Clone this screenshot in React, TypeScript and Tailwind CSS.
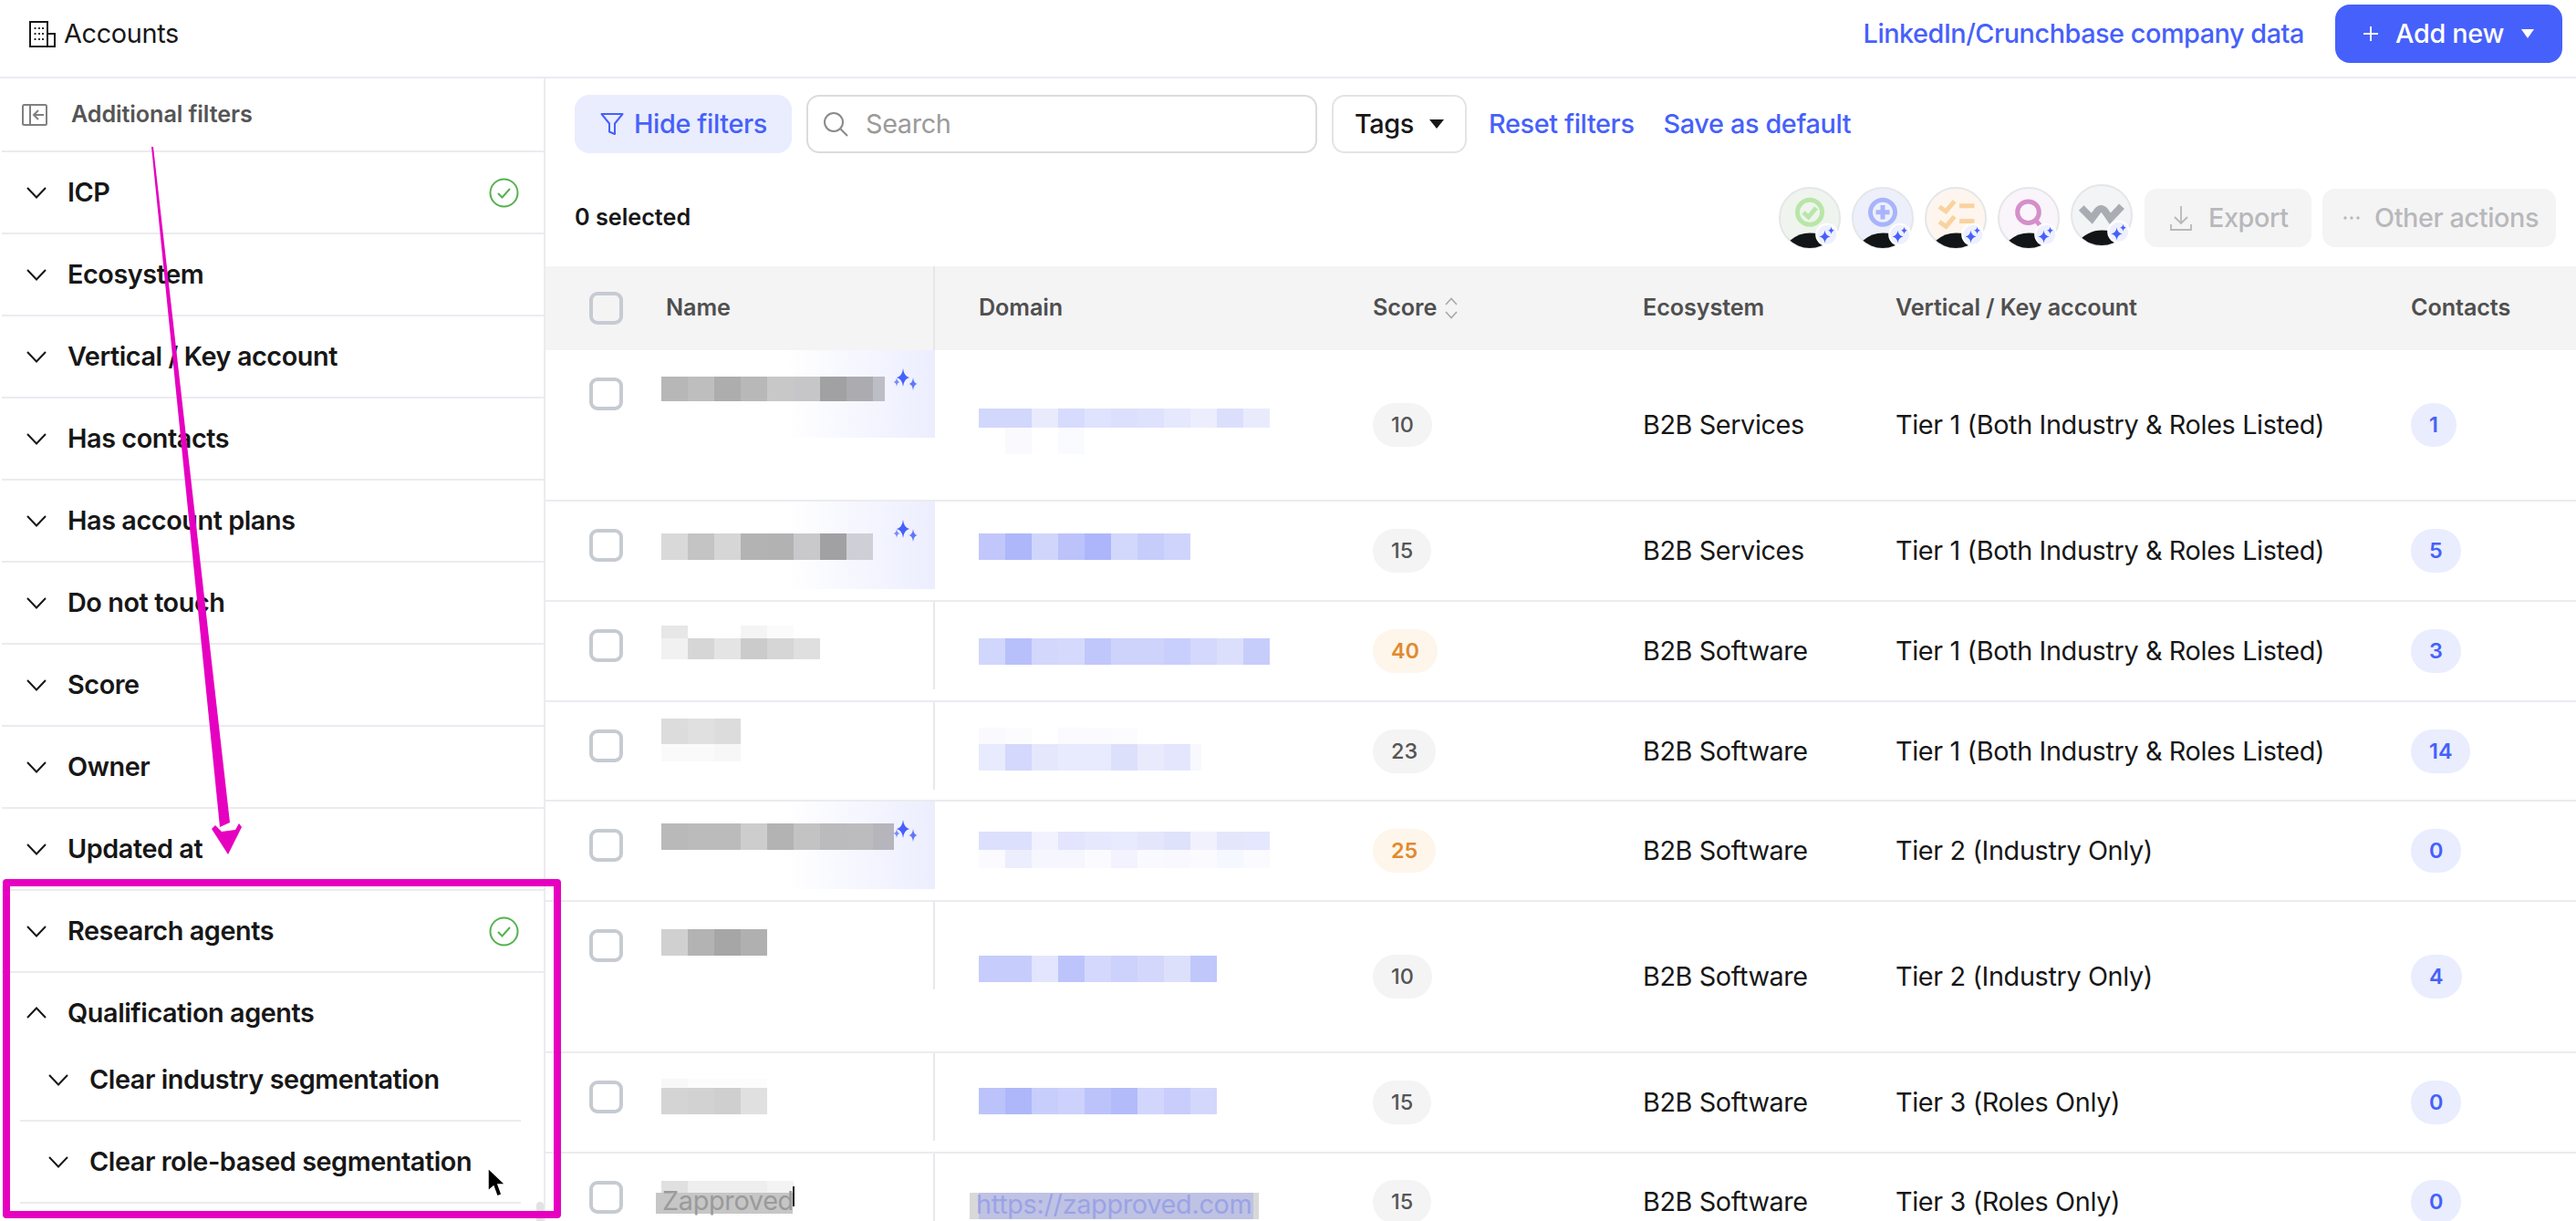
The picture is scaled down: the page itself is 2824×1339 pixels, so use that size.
import React from "react";

const star = (x: number, y: number, r: number, ry = r) => {
  const a = r * 0.14;
  const b = ry * 0.14;
  return `M${x} ${y - ry}Q${x + a} ${y - b} ${x + r} ${y}Q${x + a} ${y + b} ${x} ${y + ry}Q${x - a} ${y + b} ${x - r} ${y}Q${x - a} ${y - b} ${x} ${y - ry}Z`;
};

const Chevron = ({ up }: { up?: boolean }) => (
  <svg width="22" height="13" viewBox="0 0 22 13" fill="none" stroke="#171717" strokeWidth="2" className="shrink-0">
    <path d={up ? "M1 12 11 1.5 21 12" : "M1 1 11 11.5 21 1"} />
  </svg>
);

const GreenCheck = () => (
  <svg width="33" height="33" viewBox="0 0 33 33" fill="none" stroke="#55b24f" strokeWidth="2" className="mr-[1px] shrink-0">
    <circle cx="16.5" cy="16.5" r="15" />
    <path d="M10 17 14.5 21.5 23 12" />
  </svg>
);

const SideRow = ({ label, check }: { label: string; check?: boolean }) => (
  <div className="flex h-[90px] items-center border-b-2 border-[#ebebf0] pl-[27px] pr-[26px]">
    <Chevron />
    <span className="ml-[23px] flex-1 text-[28.8px] font-semibold tracking-[-0.43px] text-[#171717]">{label}</span>
    {check && <GreenCheck />}
  </div>
);

const ChildRow = ({ label }: { label: string }) => (
  <div className="ml-[20px] mr-[25px] flex h-[90px] items-center border-b-2 border-[#ebebf0] pl-[31px]">
    <Chevron />
    <span className="ml-[23px] text-[28.8px] font-semibold tracking-[-0.43px] text-[#171717]">{label}</span>
  </div>
);

type PixelRow = [number, string[], number?];
type Pix = { top: number; rows: PixelRow[] };

const Pixels = ({ top, rows }: Pix) => (
  <div className="flex flex-col" style={{ marginTop: top }}>
    {rows.map(([h, colors, last], i) => (
      <div key={i} className="flex" style={{ height: h }}>
        {colors.map((c, j) => (
          <div
            key={j}
            style={{
              background: c ? `#${c}` : "transparent",
              width: j === colors.length - 1 && last ? last : 29,
            }}
          />
        ))}
      </div>
    ))}
  </div>
);

type Row = {
  h: number;
  ai?: boolean;
  name: Pix;
  domain: Pix;
  score: string;
  orange?: boolean;
  eco: string;
  vert: string;
  contacts: string;
};

const T1 = "Tier 1 (Both Industry & Roles Listed)";
const T2 = "Tier 2 (Industry Only)";
const T3 = "Tier 3 (Roles Only)";

const rows: Row[] = [
  {
    h: 166, ai: true, score: "10", eco: "B2B Services", vert: T1, contacts: "1",
    name: { top: 29, rows: [[27, ["b7b7b7", "bebebe", "adadad", "b8b8b8", "c8c8c8", "c6c6c8", "a1a1a3", "acacb0", "bdbdc5"], 13]] },
    domain: { top: 64, rows: [
      [21, ["d2d7fc", "d2d7fc", "e9ebfd", "d7dbfd", "e0e3fd", "dde0fc", "dee2fd", "e6e8fd", "eceefe", "dcdffc", "e9ebfd"]],
      [29, ["", "fafafe", "", "fafbff"]],
    ] },
  },
  {
    h: 110, ai: true, score: "15", eco: "B2B Services", vert: T1, contacts: "5",
    name: { top: 35, rows: [[29, ["d9d9d9", "c4c4c4", "d6d6d6", "b3b3b3", "b2b2b2", "c9c9cb", "a1a1a3", "cfcfd8"]]] },
    domain: { top: 35, rows: [[29, ["c1c7fb", "aeb7fa", "d0d5fc", "bcc3fb", "adb6fa", "d2d7fc", "c7cdfb", "cfd4fc"]]] },
  },
  {
    h: 110, score: "40", orange: true, eco: "B2B Software", vert: T1, contacts: "3",
    name: { top: 26, rows: [
      [14, ["e7e7e7", "", "", "f4f4f4", "fbfbfb"]],
      [23, ["f1f1f1", "d6d6d6", "e4e4e4", "cbcbcb", "d6d6d6", "dfdfdf"]],
    ] },
    domain: { top: 40, rows: [[29, ["d1d6fc", "b8c0fb", "d3d7fb", "d5d9fc", "c0c7fb", "ced3fc", "ced3fc", "c9cffc", "d3d8fc", "dcdffb", "c7cdfb"]]] },
  },
  {
    h: 109, score: "23", eco: "B2B Software", vert: T1, contacts: "14",
    name: { top: 18, rows: [
      [28, ["dcdcdc", "e0e0e0", "dcdcdc"]],
      [19, ["fafafa", "fafafa", "f7f7f7"]],
    ] },
    domain: { top: 28, rows: [
      [18, ["f9f9fe", "fcfcff", "", "fafaff", "fbfbff", "fcfcff"]],
      [29, ["e8ebfd", "d3d8fc", "e5e7fd", "e8eafd", "e8eafd", "dde0fb", "e9ebfd", "e3e6fd", "f8f9ff"], 12],
    ] },
  },
  {
    h: 110, ai: true, score: "25", orange: true, eco: "B2B Software", vert: T2, contacts: "0",
    name: { top: 24, rows: [[29, ["b9b9b9", "bbbbbb", "bbbbbb", "cdcdcd", "b3b3b3", "c3c3c3", "bbbbbd", "bcbcbf", "b5b5bb"], 23]] },
    domain: { top: 33, rows: [
      [20, ["dde0fc", "dde0fc", "f1f2fe", "e2e5fd", "e6e8fd", "e8eafd", "e4e7fc", "dfe2fb", "f0f1fd", "e4e7fc", "e4e7fd"]],
      [20, ["fafaff", "eceefd", "f6f7fe", "f5f6fe", "fbfbff", "f2f3fe", "f9faff", "f8f8fe", "fbfbff", "f5f8fe", "fafaff"]],
    ] },
  },
  {
    h: 166, score: "10", eco: "B2B Software", vert: T2, contacts: "4",
    name: { top: 30, rows: [[29, ["d0d0d0", "b3b3b3", "a6a6a6", "b0b0b0"]]] },
    domain: { top: 59, rows: [[29, ["c6ccfb", "c6ccfb", "e2e5fd", "bcc4fb", "d4d8fc", "cdd2fc", "d3d7fb", "dde0fb", "c0c7fb"]]] },
  },
  {
    h: 110, score: "15", eco: "B2B Software", vert: T3, contacts: "0",
    name: { top: 28, rows: [
      [10, ["f8f8f8", "fcfcfc", "fcfcfc", "fcfcfc"]],
      [29, ["d4d4d4", "d2d2d2", "cfcfcf", "e0e0e0"]],
    ] },
    domain: { top: 38, rows: [[29, ["bcc3fb", "aeb7fa", "c8cefb", "cdd2fc", "bcc3fb", "b3bbfb", "d2d6fc", "c8cdfb", "d3d7fc"]]] },
  },
];

const Badge = ({ children, cls }: { children: React.ReactNode; cls: string }) => (
  <span className={`flex h-[48px] items-center rounded-full px-[20px] text-[23.4px] ${cls}`}>{children}</span>
);

const Checkbox = () => (
  <div className="h-[36px] w-[37px] shrink-0 rounded-[9px] border-[4px] border-[#c6cbd2]" />
);

const Cells = ({ score, orange, eco, vert, contacts }: Pick<Row, "score" | "orange" | "eco" | "vert" | "contacts">) => (
  <>
    <div className="flex w-[296px] shrink-0 items-center">
      <Badge cls={orange ? "bg-[#fef5eb] font-semibold text-[#e08a2f]" : "bg-[#f4f4f4] font-medium text-[#555555]"}>{score}</Badge>
    </div>
    <div className="flex w-[277px] shrink-0 items-center text-[28.8px] tracking-[-0.4px] text-[#171717]">{eco}</div>
    <div className="flex w-[565px] shrink-0 items-center text-[28.8px] tracking-[-0.36px] text-[#171717]">{vert}</div>
    <div className="flex flex-1 items-center">
      <Badge cls="bg-[#e9edfe] font-semibold text-[#4660fb]">{contacts}</Badge>
    </div>
  </>
);

const TableRow = ({ r }: { r: Row }) => (
  <div className="flex shrink-0 border-b-2 border-[#ebebf0]" style={{ height: r.h }}>
    <div className={`relative h-[96px] w-[427px] shrink-0 ${r.ai ? "" : "border-r-2 border-[#e8e8ea]"}`}>
      {r.ai && <div className="absolute inset-y-0 right-0 w-[164px] bg-linear-to-r from-white to-[#eceefe]" />}
      <div className="relative flex">
        <div className="ml-[48px] mt-[30px]">
          <Checkbox />
        </div>
        <div className="ml-[42px]">
          <Pixels {...r.name} />
        </div>
      </div>
      {r.ai && (
        <svg width="28" height="26" viewBox="0 0 28 26" fill="#4660fb" className="absolute left-[381px] top-[20px]">
          <path d={star(11, 10, 7, 10)} />
          <path d={star(22, 17, 4.5, 7)} opacity="0.85" />
          <path d={star(4, 15, 3.5, 5)} opacity="0.7" />
        </svg>
      )}
    </div>
    <div className="w-[480px] shrink-0 pl-[48px]">
      <Pixels {...r.domain} />
    </div>
    <Cells {...r} />
  </div>
);

const HeadText = ({ children, cls }: { children: React.ReactNode; cls: string }) => (
  <span className={`text-[25.2px] font-semibold tracking-[-0.1px] text-[#4f4f4f] ${cls}`}>{children}</span>
);

const Avatar = ({ bg, up, children }: { bg: string; up?: boolean; children: React.ReactNode }) => {
  const id = "c" + bg.slice(1);
  return (
    <svg width="68" height="68" viewBox="0 0 68 68" className={`shrink-0 ${up ? "mr-[1px] -mt-[6px]" : ""}`}>
      <defs>
        <clipPath id={id}>
          <circle cx="34" cy="34" r="33" />
        </clipPath>
      </defs>
      <circle cx="34" cy="34" r="33" fill={bg} stroke="#e5e6e9" strokeWidth="2" />
      {children}
      <path d="M12 59Q26 47 45 52L52 62 42 70H18Z" fill="#111518" clipPath={`url(#${id})`} />
      <circle cx="52.7" cy="52.3" r="12.5" fill="#fff" />
      <circle cx="52.7" cy="52.3" r="10.5" fill="#eef0fe" />
      <path d={star(50.5, 54.5, 6, 7)} fill="#4660fb" />
      <path d={star(57.5, 47.8, 3.4, 4)} fill="#4660fb" />
    </svg>
  );
};

export default function App() {
  return (
    <div className="relative flex h-[1339px] w-[2824px] flex-col overflow-hidden bg-white [font-family:Inter,sans-serif]">
      <header className="flex h-[86px] shrink-0 items-center border-b-2 border-[#ebebf0] pb-[10px]">
        <svg width="30" height="30" viewBox="0 0 30 30" fill="none" stroke="#171717" strokeWidth="2" className="ml-[31px]">
          <path d="M2 29V2H21V29ZM21 15H29V29H2" />
          <path d="M7.5 8v2M12 8v2M16 8v2M7.5 14v2M12 14v2M16 14v2M7.5 20v2M12 20v2M16 20v2" strokeWidth="1.8" />
        </svg>
        <span className="ml-[9px] text-[28.8px] tracking-[-0.3px] text-[#171717]">Accounts</span>
        <a className="ml-auto text-[28.8px] font-medium tracking-[-0.45px] text-[#4660fb]">LinkedIn/Crunchbase company data</a>
        <button className="ml-[34px] mr-[15px] flex h-[64px] w-[249px] items-center rounded-[16px] bg-[#4660fb] pl-[30px] text-[28.8px] font-medium tracking-[-0.3px] text-white">
          <svg width="18" height="18" viewBox="0 0 18 18" stroke="#fff" strokeWidth="2">
            <path d="M9 1v16M1 9h16" />
          </svg>
          <span className="ml-[18px]">Add new</span>
          <svg width="14" height="10" viewBox="0 0 14 10" fill="#fff" className="ml-[19px]">
            <path d="M0 0h14L7 10Z" />
          </svg>
        </button>
      </header>

      <div className="flex min-h-0 flex-1">
        <aside className="relative ml-[2px] w-[596px] shrink-0 overflow-hidden border-r-2 border-[#ebebf0]">
          <div className="flex h-[81px] items-center border-b-2 border-[#ebebf0] pl-[22px]">
            <svg width="28" height="24" viewBox="0 0 28 24" fill="none" stroke="#808080" strokeWidth="2">
              <rect x="1" y="1" width="26" height="22" rx="1.5" />
              <path d="M9 1v22M24 12H14M18 7l-5 5 5 5" />
            </svg>
            <span className="ml-[26px] text-[25.2px] font-semibold tracking-[-0.1px] text-[#555555]">Additional filters</span>
          </div>
          <SideRow label="ICP" check />
          <SideRow label="Ecosystem" />
          <SideRow label="Vertical / Key account" />
          <SideRow label="Has contacts" />
          <SideRow label="Has account plans" />
          <SideRow label="Do not touch" />
          <SideRow label="Score" />
          <SideRow label="Owner" />
          <SideRow label="Updated at" />
          <SideRow label="Research agents" check />
          <div className="flex h-[73px] items-center pl-[27px] pt-[14px]">
            <Chevron up />
            <span className="ml-[23px] text-[28.8px] font-semibold tracking-[-0.43px] text-[#171717]">Qualification agents</span>
          </div>
          <ChildRow label="Clear industry segmentation" />
          <ChildRow label="Clear role-based segmentation" />
          <div className="absolute bottom-0 right-0 h-[21px] w-[8px] rounded-t-full bg-[#e2e2e2]" />
        </aside>

        <main className="flex min-w-0 flex-1 flex-col overflow-hidden">
          <div className="flex h-[82px] shrink-0 items-end gap-[16px] pl-[32px] text-[28.8px] font-medium tracking-[-0.35px]">
            <button className="flex h-[64px] w-[238px] items-center rounded-[16px] bg-[#e9edfe] pl-[28px] text-[#4660fb]">
              <svg width="26" height="26" viewBox="0 0 26 26" fill="none" stroke="#4660fb" strokeWidth="2" strokeLinejoin="round">
                <path d="M1.5 2h23l-8.5 10.5V24l-6-2.5v-9Z" />
              </svg>
              <span className="ml-[11px]">Hide filters</span>
            </button>
            <div className="flex h-[64px] w-[560px] items-center rounded-[14px] border-2 border-[#dcdcdf] pl-[15px]">
              <svg width="30" height="30" viewBox="0 0 30 30" fill="none" stroke="#8a8a8a" strokeWidth="2">
                <circle cx="13" cy="13" r="10" />
                <path d="M20.5 20.5 28 28" />
              </svg>
              <span className="ml-[18px] font-normal text-[#9a9a9a]">Search</span>
            </div>
            <button className="flex h-[64px] w-[148px] items-center rounded-[14px] border-2 border-[#e4e4e7] pl-[23px] text-[#171717]">
              Tags
              <svg width="16" height="10" viewBox="0 0 16 10" fill="#171717" className="ml-[17px]">
                <path d="M0 0h16L8 10Z" />
              </svg>
            </button>
            <div className="flex h-[64px] items-center gap-[32px] pl-[8px] text-[#4660fb]">
              <span>Reset filters</span>
              <span>Save as default</span>
            </div>
          </div>

          <div className="flex h-[124px] shrink-0 items-center pl-[32px] pr-[22px] pt-[18px]">
            <span className="text-[25.2px] font-semibold text-[#171717]">0 selected</span>
            <div className="ml-auto flex items-center gap-[12px]">
              <Avatar bg="#eff4ee">
                <circle cx="34" cy="27.7" r="13.5" fill="none" stroke="#b8e6a8" strokeWidth="5" />
                <path d="M27 28l5.5 5L41 23" fill="none" stroke="#b8e6a8" strokeWidth="5" />
              </Avatar>
              <Avatar bg="#edf0fb">
                <circle cx="34" cy="27.7" r="13.5" fill="none" stroke="#a8b4fa" strokeWidth="5" />
                <path d="M34 20v15.5M26.5 27.7h15" fill="none" stroke="#a8b4fa" strokeWidth="5" />
              </Avatar>
              <Avatar bg="#fef6ee">
                <path d="M16 21.7 23.3 26.7 32.7 15.7M16 38.3 23.3 43.3 32.7 32.3" fill="none" stroke="#f9d39f" strokeWidth="5" />
                <path d="M38 20.7h16.5M38 37.5h16.5" stroke="#f9d39f" strokeWidth="5" />
              </Avatar>
              <Avatar bg="#f9f5fa">
                <circle cx="33.5" cy="27.7" r="11.8" fill="none" stroke="#d58fca" strokeWidth="5" />
                <path d="M41.7 36.7 46.7 42.3" stroke="#d58fca" strokeWidth="5" />
              </Avatar>
              <Avatar bg="#f3f4f6" up>
                <path d="M11.7 26 23.3 37.7 29 30Q33.3 24 38 30L43.3 37.7 56 24.3" fill="none" stroke="#a9adb3" strokeWidth="8" />
              </Avatar>
              <button className="flex h-[64px] w-[183px] items-center rounded-[14px] bg-[#f4f4f5] pl-[28px] text-[28.8px] font-medium tracking-[-0.4px] text-[#b8b8bb]">
                <svg width="24" height="28" viewBox="0 0 24 28" fill="none" stroke="#b8b8bb" strokeWidth="1.8">
                  <path d="M12 1v18M5 13l7 7 7-7M1 21v6h22v-6" />
                </svg>
                <span className="ml-[18px]">Export</span>
              </button>
              <button className="flex h-[64px] w-[256px] items-center rounded-[14px] bg-[#f4f4f5] pl-[22px] text-[28.8px] font-medium tracking-[-0.4px] text-[#b8b8bb]">
                <svg width="20" height="6" viewBox="0 0 20 6" fill="#b8b8bb">
                  <circle cx="3" cy="3" r="1.7" />
                  <circle cx="10" cy="3" r="1.7" />
                  <circle cx="17" cy="3" r="1.7" />
                </svg>
                <span className="ml-[15px]">Other actions</span>
              </button>
            </div>
          </div>

          <div className="flex h-[92px] shrink-0 items-center bg-[#f4f4f4]">
            <div className="flex h-full w-[427px] shrink-0 items-center border-r-2 border-[#e6e6e6] pl-[48px]">
              <Checkbox />
              <HeadText cls="ml-[47px]">Name</HeadText>
            </div>
            <HeadText cls="w-[480px] shrink-0 pl-[48px]">Domain</HeadText>
            <div className="flex w-[296px] shrink-0 items-center">
              <HeadText cls="">Score</HeadText>
              <svg width="16" height="24" viewBox="0 0 16 24" fill="none" stroke="#a8a8a8" strokeWidth="1.6" className="ml-[8px]">
                <path d="M2 8 8 1.5 14 8M2 16 8 22.5 14 16" />
              </svg>
            </div>
            <HeadText cls="w-[277px] shrink-0">Ecosystem</HeadText>
            <HeadText cls="w-[565px] shrink-0">Vertical / Key account</HeadText>
            <HeadText cls="">Contacts</HeadText>
          </div>

          {rows.map((r, i) => (
            <TableRow key={i} r={r} />
          ))}

          <div className="flex h-[106px] shrink-0">
            <div className="relative h-[96px] w-[427px] shrink-0 border-r-2 border-[#e8e8ea]">
              <div className="flex">
                <div className="ml-[48px] mt-[30px]">
                  <Checkbox />
                </div>
                <div className="ml-[42px]">
                  <Pixels top={30} rows={[[13, ["e0e0e0", "eeeeee", "eeeeee", "eeeeee", "f3f3f3"]]]} />
                </div>
              </div>
              <div className="absolute left-[121px] top-[43px] flex h-[23px] w-[150px] items-center overflow-visible bg-[#c6c6c6] pb-[6px] pl-[7px] text-[28.8px] leading-[20px] tracking-[-0.3px] text-[#9a9a9a]">
                Zapproved
              </div>
              <div className="absolute left-[271px] top-[36px] h-[22px] w-[2px] bg-[#222222]" />
            </div>
            <div className="relative w-[480px] shrink-0">
              <div className="absolute left-[38px] top-[43px] flex h-[29px] w-[317px] items-center bg-[#d8d8d8] pb-[4px] pl-[7px]">
                <div className="absolute inset-y-0 left-[10px] right-[6px] bg-[#bfc2e3]" />
                <span className="relative text-[28.8px] leading-[25px] tracking-[-0.3px] text-[#9aa3e6]">https://zapproved.com</span>
              </div>
            </div>
            <Cells score="15" eco="B2B Software" vert={T3} contacts="0" />
          </div>
        </main>
      </div>

      <div className="pointer-events-none absolute left-[3px] top-[964px] h-[372px] w-[612px] rounded-[4px] border-[8px] border-[#e600c0]" />
      <svg width="300" height="800" viewBox="0 0 300 800" fill="#e600c0" className="pointer-events-none absolute left-0 top-[150px]">
        <path d="M166 11 168 11 252 752 241 757Z" />
        <path d="M232 759 236 755 243 762 258 760 262 753 265 757 250 787Z" />
      </svg>
      <svg width="22" height="34" viewBox="0 0 22 34" className="pointer-events-none absolute left-[533px] top-[1280px]">
        <path d="M2 1 2 26 8 21 12 32 17 30 13 19 21 19Z" fill="#000" stroke="#fff" strokeWidth="1.5" />
      </svg>
    </div>
  );
}
